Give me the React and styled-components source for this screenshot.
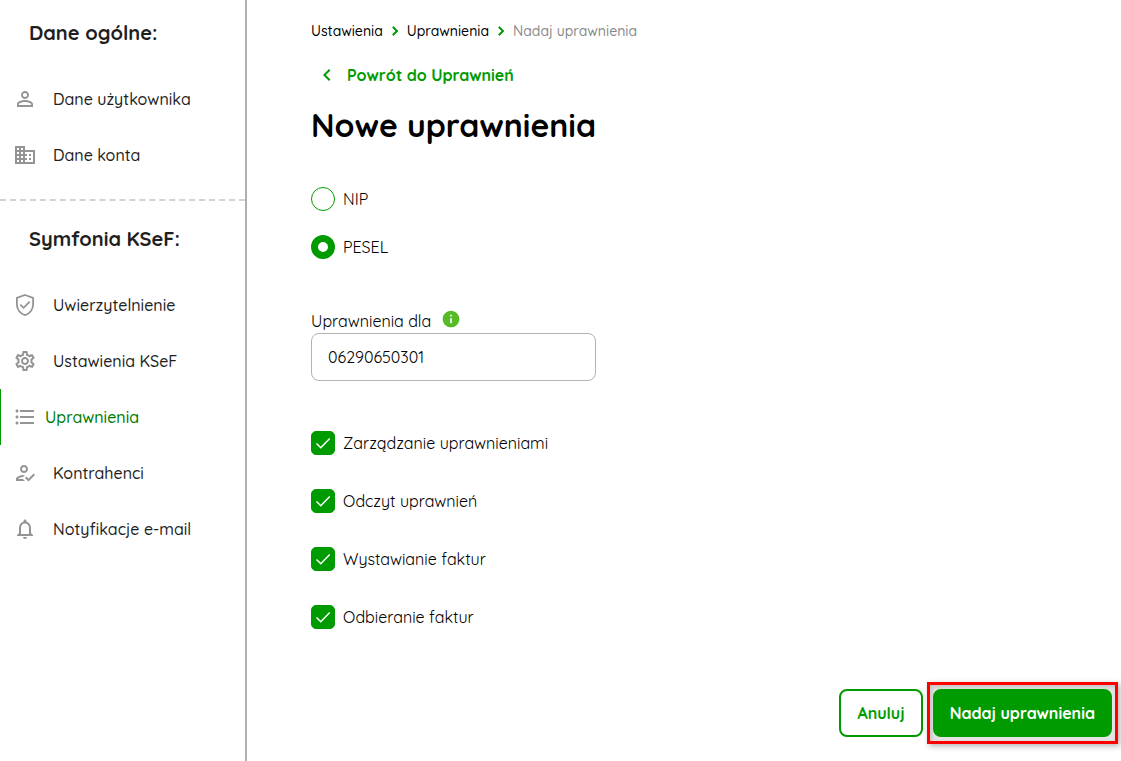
import React, {useState} from 'react';
import styled, {createGlobalStyle} from 'styled-components';
import {
  MdPersonOutline,
  MdBusiness,
  MdOutlineSettings,
  MdFormatListBulleted,
  MdOutlineHowToReg,
  MdNotificationsNone,
  MdChevronLeft,
  MdChevronRight,
  MdInfo,
} from 'react-icons/md';


const GlobalStyle = createGlobalStyle`
* {
  box-sizing: border-box;
}
body {
  margin: 0;
  background-color: #fff;
  color: #000;
}
body, button, input {
  font-family: Quicksand, Inter, sans-serif;
  font-size: 16px;
}
`;

const Page = styled.div`
display: flex;
min-height: 100vh;
`;

const Sidebar = styled.aside`
flex: 0 0 247px;
border-right: 2px solid #b0b0b0;
color: #1f1f1f;
`;

const Section = styled.section`
padding: 15px 0 16px;

& + & {
  border-top: 2px dashed #d3d3d3;
  padding-top: 20px;
}
`;

const SectionTitle = styled.h2`
margin: 0 0 20px;
padding-left: 29px;
font-size: 20px;
line-height: 36px;
font-weight: 700;
`;

const NavLink = styled.a`
display: flex;
align-items: center;
gap: ${({$active}) => ($active ? 8 : 16)}px;
height: 56px;
padding-left: 13px;
color: ${({$active}) => ($active ? '#007a00' : 'inherit')};
box-shadow: ${({$active}) => ($active ? 'inset 1px 0 0 #009b00' : 'none')};
font-weight: 500;
text-decoration: none;

svg {
  width: 24px;
  height: 24px;
  color: #949494;
}
`;

const Main = styled.main`
display: flex;
flex: 1;
flex-direction: column;
padding: 19px 3px 17px 64px;
`;

const Breadcrumbs = styled.nav`
display: flex;
align-items: center;
gap: 3px;
height: 24px;
font-size: 14px;
font-weight: 500;

a {
  color: #000;
  text-decoration: none;
}
span {
  color: #8a8a8a;
}
svg {
  width: 18px;
  height: 18px;
  color: #009b00;
}
path:last-child {
  stroke-width: 1px;
}
`;

const BackLink = styled.a`
display: flex;
align-items: center;
gap: 8px;
height: 24px;
margin-top: 20px;
padding-left: 4px;
color: #009b00;
font-weight: 700;
text-decoration: none;

svg {
  width: 24px;
  height: 24px;
}
`;

const Title = styled.h1`
margin: 16px 0 40px;
font-size: 32px;
line-height: 44px;
font-weight: 700;
`;

const Options = styled.div`
display: flex;
flex-direction: column;
gap: ${({$gap}) => $gap}px;
`;

const Option = styled.label`
display: flex;
align-items: center;
gap: 8px;
height: 24px;
`;

const Radio = styled.input`
appearance: none;
width: 24px;
height: 24px;
margin: 0;
border: 1px solid #009b00;
border-radius: 50%;

&:checked {
  border-width: 7px;
}
`;

const CheckWrap = styled.span`
display: grid;

> * {
  grid-area: 1 / 1;
}
svg {
  pointer-events: none;
}
`;

const CheckInput = styled.input`
appearance: none;
width: 24px;
height: 24px;
margin: 0;
border: 1px solid #009b00;
border-radius: 5px;

&:checked {
  background-color: #009b00;
}
`;

const Field = styled.div`
margin: 50px 0;
`;

const FieldLabel = styled.div`
display: flex;
align-items: center;
gap: 10px;
height: 24px;

svg {
  width: 20px;
  height: 20px;
  margin-bottom: 4px;
  color: #56bb27;
}
`;

const TextInput = styled.input`
display: block;
width: 285px;
height: 48px;
padding: 0 16px;
border: 1px solid #b3b3b3;
border-radius: 8px;
background-color: #fff;
color: #000;
`;

const Actions = styled.div`
display: flex;
justify-content: flex-end;
align-items: center;
gap: 4px;
margin-top: auto;
`;

const Button = styled.button`
height: 48px;
padding: 0 ${({$primary}) => ($primary ? 15 : 16)}px;
border: 2px solid #009b00;
border-radius: 8px;
background-color: ${({$primary}) => ($primary ? '#009b00' : '#fff')};
color: ${({$primary}) => ($primary ? '#fff' : '#009b00')};
font-weight: 700;
`;

const Highlight = styled.div`
padding: 4px 3px;
border: 3px solid #f00;
background-color: #e4e4e4;
box-shadow: 2px 2px 6px rgba(0, 0, 0, .3), inset 2px 2px 4px rgba(0, 0, 0, .15);
`;


const ShieldCheck = () => (
  <svg viewBox="0 0 24 24" fill="none" stroke="currentColor" strokeWidth="1.8">
    <path d="M12 2L20.1 4.9V11.5C20.1 16.5 16.7 20.8 12 22.1C7.3 20.8 3.9 16.5 3.9 11.5V4.9Z"/>
    <path d="M7.3 11.7L10.6 14.8L16.7 8.6"/>
  </svg>
);

const sections = [
  {
    title: 'Dane ogólne:',
    items: [
      {label: 'Dane użytkownika', Icon: MdPersonOutline},
      {label: 'Dane konta', Icon: MdBusiness},
    ],
  },
  {
    title: 'Symfonia KSeF:',
    items: [
      {label: 'Uwierzytelnienie', Icon: ShieldCheck},
      {label: 'Ustawienia KSeF', Icon: MdOutlineSettings},
      {label: 'Uprawnienia', Icon: MdFormatListBulleted, active: true},
      {label: 'Kontrahenci', Icon: MdOutlineHowToReg},
      {label: 'Notyfikacje e-mail', Icon: MdNotificationsNone},
    ],
  },
];

const permissions = [
  'Zarządzanie uprawnieniami',
  'Odczyt uprawnień',
  'Wystawianie faktur',
  'Odbieranie faktur',
];

const Checkbox = ({label}) => (
  <Option>
    <CheckWrap>
      <CheckInput type="checkbox" defaultChecked/>
      <svg width="24" height="24" viewBox="0 0 24 24" fill="none" stroke="#fff" strokeWidth="1.5">
        <path d="M5.5 12.5l4.3 4.3L18.7 7.5"/>
      </svg>
    </CheckWrap>
    {label}
  </Option>
);

export default function App() {
  const [idType, setIdType] = useState('PESEL');
  const [idNumber, setIdNumber] = useState('06290650301');

  return (
    <Page>
      <GlobalStyle/>
      <Sidebar>
        {sections.map(({title, items}) => (
          <Section key={title}>
            <SectionTitle>{title}</SectionTitle>
            {items.map(({label, Icon, active}) => (
              <NavLink key={label} href="#" $active={active}>
                <Icon/>
                {label}
              </NavLink>
            ))}
          </Section>
        ))}
      </Sidebar>

      <Main>
        <Breadcrumbs>
          <a href="#">Ustawienia</a>
          <MdChevronRight/>
          <a href="#">Uprawnienia</a>
          <MdChevronRight/>
          <span>Nadaj uprawnienia</span>
        </Breadcrumbs>
        <BackLink href="#"><MdChevronLeft/>Powrót do Uprawnień</BackLink>
        <Title>Nowe uprawnienia</Title>

        <Options $gap={24}>
          {['NIP', 'PESEL'].map((type) => (
            <Option key={type}>
              <Radio
                type="radio"
                name="idType"
                checked={idType === type}
                onChange={() => setIdType(type)}
              />
              {type}
            </Option>
          ))}
        </Options>

        <Field>
          <FieldLabel>
            <label htmlFor="idNumber">Uprawnienia dla</label>
            <MdInfo/>
          </FieldLabel>
          <TextInput
            id="idNumber"
            value={idNumber}
            onChange={(e) => setIdNumber(e.target.value)}
          />
        </Field>

        <Options $gap={34}>
          {permissions.map((label) => <Checkbox key={label} label={label}/>)}
        </Options>

        <Actions>
          <Button type="button">Anuluj</Button>
          <Highlight>
            <Button type="button" $primary>Nadaj uprawnienia</Button>
          </Highlight>
        </Actions>
      </Main>
    </Page>
  );
}
